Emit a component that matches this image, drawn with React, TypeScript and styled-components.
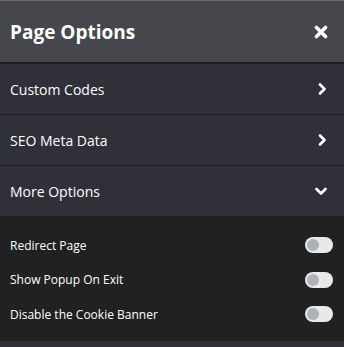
import React from "react";
import styled, { createGlobalStyle } from "styled-components";

const Global = createGlobalStyle`
  html, body { margin: 0; padding: 0; background: #2f3038; }
  body { font-family: "Open Sans", "Noto Sans", Arial, sans-serif; }
`;

const Panel = styled.div`
  width: 344px;
  height: 347px;
  display: flex;
  flex-direction: column;
  background: #2f3038;
  border-top: 1px solid #6a6b70;
  box-sizing: border-box;
  overflow: hidden;
`;

const Header = styled.div`
  height: 61px;
  flex: none;
  display: flex;
  align-items: center;
  justify-content: space-between;
  padding: 0 16px 0 10px;
  background: #46474d;
  border-bottom: 2px solid #1d1e22;
`;

const Title = styled.h1`
  margin: 0;
  font-size: 19px;
  font-weight: 700;
  color: #ffffff;
  letter-spacing: 0;
`;

const IconBtn = styled.span`
  display: flex;
  align-items: center;
  color: #fff;
`;

const Row = styled.div<{ $last?: boolean }>`
  height: 50px;
  flex: none;
  display: flex;
  align-items: center;
  justify-content: space-between;
  padding: 0 17px 0 10px;
  background: #2f3038;
  border-bottom: ${(p) => (p.$last ? "none" : "1px solid #1e1f23")};
  color: #ffffff;
  font-size: 14px;
`;

const Sub = styled.div`
  height: 125px;
  flex: none;
  background: #212121;
  display: flex;
  flex-direction: column;
  padding: 12px 11px 0 10px;
  box-sizing: border-box;
`;

const ToggleRow = styled.div`
  height: 34.5px;
  display: flex;
  align-items: center;
  justify-content: space-between;
  color: #ffffff;
  font-size: 12px;
`;

const Switch = styled.span`
  width: 28px;
  height: 16px;
  border-radius: 8px;
  background: #e9e9eb;
  display: flex;
  align-items: center;
  padding: 0 2px;
  box-sizing: border-box;
`;

const Knob = styled.span`
  width: 12px;
  height: 12px;
  border-radius: 50%;
  background: #adb2b9;
`;

const Close = () => (
  <svg width="14" height="14" viewBox="0 0 14 14">
    <path d="M2.5 2.5 L11.5 11.5 M11.5 2.5 L2.5 11.5" stroke="#fff" strokeWidth="3.6" strokeLinecap="round" />
  </svg>
);

const ChevronRight = () => (
  <svg width="9" height="12" viewBox="0 0 9 12">
    <path d="M2 1.5 L6.5 6 L2 10.5" fill="none" stroke="#fff" strokeWidth="2.6" strokeLinecap="round" strokeLinejoin="round" />
  </svg>
);

const ChevronDown = () => (
  <svg width="12" height="9" viewBox="0 0 12 9">
    <path d="M1.5 2 L6 6.5 L10.5 2" fill="none" stroke="#fff" strokeWidth="2.6" strokeLinecap="round" strokeLinejoin="round" />
  </svg>
);

const toggles = ["Redirect Page", "Show Popup On Exit", "Disable the Cookie Banner"];

export default function App() {
  return (
    <>
      <Global />
      <Panel>
        <Header>
          <Title>Page Options</Title>
          <IconBtn><Close /></IconBtn>
        </Header>
        <Row>
          <span>Custom Codes</span>
          <IconBtn><ChevronRight /></IconBtn>
        </Row>
        <Row>
          <span>SEO Meta Data</span>
          <IconBtn><ChevronRight /></IconBtn>
        </Row>
        <Row $last>
          <span>More Options</span>
          <IconBtn><ChevronDown /></IconBtn>
        </Row>
        <Sub>
          {toggles.map((t) => (
            <ToggleRow key={t}>
              <span>{t}</span>
              <Switch><Knob /></Switch>
            </ToggleRow>
          ))}
        </Sub>
      </Panel>
    </>
  );
}
